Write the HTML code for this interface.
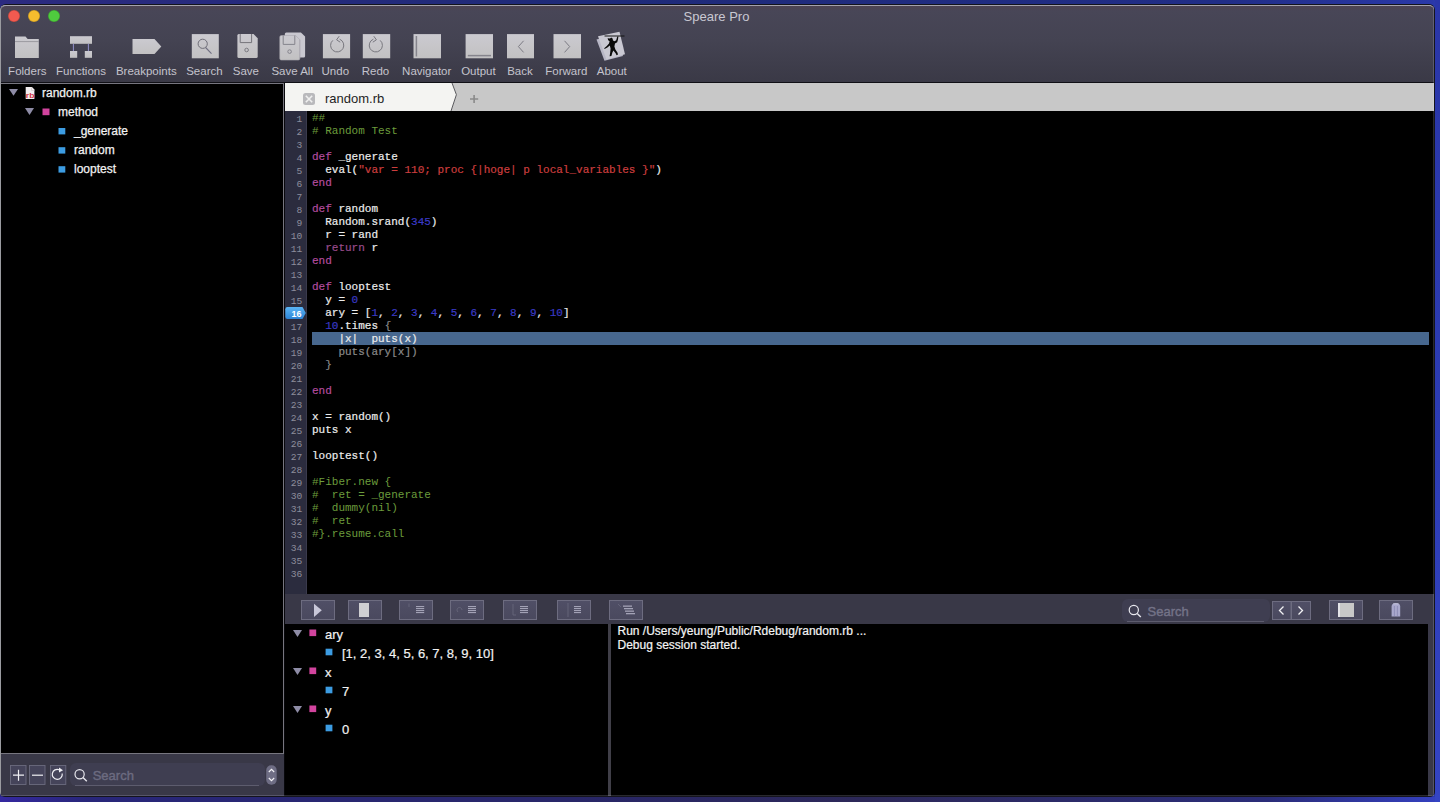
<!DOCTYPE html>
<html><head><meta charset="utf-8">
<style>
*{margin:0;padding:0;box-sizing:border-box}
html,body{width:1440px;height:802px;overflow:hidden}
body{position:relative;background:linear-gradient(90deg,#2c2a80 0%,#1f2a78 40%,#212d86 85%,#2a38a8 99.5%,#2c3cb8 100%);font-family:"Liberation Sans",sans-serif}
.a{position:absolute}
#frame{left:0;top:4px;width:1435px;height:793px;background:#14141c;border-radius:6px 6px 5px 5px}
#edge{left:0;top:5px;width:1434px;height:791px;border-left:1px solid #9a9ba0;border-top:1px solid #9a9ba0;border-radius:5px 5px 4px 4px;background:#393847}
#inner{left:1px;top:5px;width:1433px;height:791px;background:#393847;border-radius:5px 5px 4px 4px;overflow:hidden}
#tb{left:1px;top:5px;width:1433px;height:77px;background:linear-gradient(180deg,#4e4352 0px,#484657 5px,#444352 35px,#3a3946 76px);border-top:1px solid #a4a2ac;border-radius:5px 5px 0 0}
#tbline{left:1px;top:82px;width:1433px;height:1px;background:#101016}
.title{left:-1px;width:1435px;top:8.5px;text-align:center;color:#c9c8d2;font-size:13px}
.light{width:12px;height:12px;border-radius:50%;box-shadow:inset 0 0 0 0.6px rgba(0,0,0,0.22)}
.tl{font-size:11.5px;color:#c4c3cc;top:64px;white-space:nowrap;text-align:center;width:80px}
.ic{background:#c4c3c8}
#left{left:1px;top:83px;width:283px;height:671px;background:#000;border-top:1px solid #77767f;border-right:1px solid #77767f;border-bottom:1px solid #77767f}
.tree{font-size:12px;color:#f0f0f0;white-space:nowrap}
.tri{width:0;height:0;border-left:4.5px solid transparent;border-right:4.5px solid transparent;border-top:7px solid #8e8ca4}
.sqp{width:7px;height:7px;background:#d03a9a}
.sqb{width:7px;height:7px;background:#3a9ae0}
#lbar{left:1px;top:754px;width:283px;height:42px;background:#393847}
#tabbar{left:285px;top:83px;width:1149px;height:28px;background:#c8c8c8}
#gutter{left:285px;top:111px;width:22px;height:483px;background:#2b2c3e;border-right:1px solid #3a3a4c}
#code{left:307px;top:111px;width:1127px;height:483px;background:#000}
pre.ln{font-family:"Liberation Mono",monospace;font-size:9.6px;line-height:13px;color:#8e8e9c;-webkit-text-stroke-width:0;left:285px;width:17.2px;text-align:right}
pre{font-family:"Liberation Mono",monospace;font-size:11px;line-height:13px;color:#ececec;-webkit-text-stroke-width:0.2px}
.k{color:#b44c9e}.c{color:#6c9c3c;-webkit-text-stroke-width:0}.s{color:#cc3e3e}.n{color:#3a3ac6}.g{color:#8a8a8a}.r{color:#9a4c8c}
#dtb{left:285px;top:595px;width:1149px;height:29px;background:#393847}
.db{width:34px;height:20px;background:#4a4a5e;border:1px solid #6e6d80}
#vars{left:285px;top:624px;width:323px;height:172px;background:#000}
#div{left:608px;top:624px;width:3px;height:172px;background:#403f48}
#out{left:611px;top:624px;width:817px;height:172px;background:#000}
.out{font-size:12px;color:#f2f2f2;line-height:14px;white-space:pre}
.vt{font-size:13px;color:#f0f0f0;white-space:nowrap}
#bline{left:1px;top:795px;width:1433px;height:1px;background:rgba(225,225,255,0.18)}
#rline{left:1433px;top:6px;width:1px;height:790px;background:rgba(225,225,255,0.18)}
</style></head><body>
<div class="a" style="left:0;top:797px;width:1440px;height:5px;background:linear-gradient(90deg,#3428a0 0%,#28267a 6%,#282668 40%,#2c2858 60%,#2a2c78 88%,#3440c0 100%)"></div>
<div class="a" style="left:1435px;top:0;width:5px;height:802px;background:linear-gradient(180deg,#2a36a8 0%,#2c3cb4 50%,#3444c4 100%)"></div>
<div id="frame" class="a"></div>
<div id="edge" class="a"></div>
<div id="tb" class="a"></div>
<div id="tbline" class="a"></div>
<div class="a title">Speare Pro</div>
<div class="a light" style="left:8px;top:10px;background:#f25a50"></div>
<div class="a light" style="left:28px;top:10px;background:#f6bd2e"></div>
<div class="a light" style="left:48px;top:10px;background:#4fcb3e"></div>
<svg class="a" style="left:0;top:0" width="700" height="82" viewBox="0 0 700 82">
<defs>
<linearGradient id="ig" x1="0" y1="0" x2="0" y2="1"><stop offset="0" stop-color="#cbcad0"/><stop offset="1" stop-color="#c2c1c2"/></linearGradient>
</defs>
<g fill="url(#ig)">
<!-- Folders -->
<path d="M15 36.5h10.5l2.2 2.5H38.8V58H15z"/>
<!-- Functions -->
<rect x="70" y="36.2" width="22" height="7.6"/>
<rect x="70" y="51" width="7.2" height="6.8"/>
<rect x="84.8" y="51" width="7.2" height="6.8"/>
<!-- Breakpoints -->
<path d="M132.5 39H154.5L161.3 46.5L154.5 54H132.5z"/>
<!-- Search -->
<rect x="191.8" y="34.1" width="27" height="24.2"/>
<!-- Save -->
<path d="M237.4 35.5q0-1.5 1.5-1.5H253.5L257.7 38.2V56.5q0 1.5-1.5 1.5H238.9q-1.5 0-1.5-1.5z"/>
<!-- Save All back -->
<path d="M284.8 33.9q0-1.5 1.5-1.5H300.9L305.1 36.6V55.9q0 1.5-1.5 1.5H286.3q-1.5 0-1.5-1.5z" fill="#c9c8d0"/>
<!-- Save All front -->
<path d="M279.8 37q0-1.5 1.5-1.5H295.6L299.8 39.7V58.5q0 1.5-1.5 1.5H281.3q-1.5 0-1.5-1.5z" stroke="#a9a8b0" stroke-width="0.6"/>
<!-- Undo/Redo/Navigator/Output/Back/Forward -->
<rect x="322.9" y="34.1" width="27.2" height="24.2"/>
<rect x="362.8" y="34.1" width="27.4" height="24.2"/>
<rect x="413.5" y="34.1" width="27.5" height="24.2"/>
<rect x="465.6" y="34.1" width="27.4" height="24.2"/>
<rect x="507" y="34.1" width="27" height="24.2"/>
<rect x="553.5" y="34.1" width="27.5" height="24.2"/>
<!-- About -->
<path d="M596.5 39.5L616.5 34L623 56L604.5 60.8z" fill="#b8b7c6"/>
<path d="M598 36.3L619.5 31.8L625 54.2L606.5 59.5z" fill="#c9c8d2"/>
</g>
<g fill="none" stroke="#77767e" stroke-width="1">
<path d="M15 41.6H38.8" stroke="#8e8d94" stroke-width="0.8"/>
<path d="M73.4 43.8V51M88.4 43.8V51" stroke="#9b9ad8" stroke-width="0.9"/>
<circle cx="202.7" cy="43.8" r="4.6" stroke="#6f6e78"/>
<path d="M205.6 47.5L211.5 53.6" stroke="#6f6e80" stroke-width="1.1"/>
<path d="M240.2 34V42.6H251.6V34" stroke="#74737a"/>
<circle cx="246.6" cy="50" r="1.8" stroke="#7c7b82"/>
<path d="M283.2 35.5V44.4H294.8V35.5" stroke="#85848c"/>
<circle cx="289.6" cy="51.6" r="1.8" stroke="#85848c"/>
<path d="M299.8 39.7V58.5" stroke="#a2a1aa" stroke-width="0.6"/>
<path d="M332.8 40.4A6.6 6.6 0 1 0 339.6 39.2" stroke="#78777e"/>
<path d="M339.2 36.2L336.6 39.8L340.2 42.2" stroke="#78777e"/>
<path d="M380.2 40.4A6.6 6.6 0 1 1 373.4 39.2" stroke="#78777e"/>
<path d="M373.8 36.2L376.4 39.8L372.8 42.2" stroke="#78777e"/>
<path d="M416.4 36V56.5" stroke="#85848c" stroke-width="1.5"/>
<path d="M467.8 55.6H491" stroke="#85848c" stroke-width="1.5"/>
<path d="M523.6 40.8L518.4 46.6L523.6 52.4" stroke="#7c7b84"/>
<path d="M564.5 40.8L569.7 46.6L564.5 52.4" stroke="#7c7b84"/>
</g>
<!-- about figure -->
<g fill="#0a0a0a">
<path d="M604.5 35.6L624.5 35.4L624.5 36.4L604.5 36.6z" fill="#151515"/>
<path d="M607.6 38.2L610 38.6L611.2 37.6L612.6 38.4L613 40.4L614.6 41.2L616.2 40.2L617 37.4L617.6 36.2L618.4 36.6L618 39.4L617.2 42.2L615 43.6L614.4 46.4L615.4 49.4L617.4 52.4L618 54.6L616.6 55.2L615.6 53.2L613.4 50.6L612.4 52.6L611.4 56L609.6 56.2L610.2 52.4L610.6 48.4L609.8 45.6L607.4 47.4L604.6 49L604.2 48.2L606.8 46L609 43.4L609.6 41.2L608.2 40.2z"/>
</g>
<g font-family="Liberation Sans" font-size="11.5" fill="#c4c3cc" text-anchor="middle">
<text x="27.3" y="75">Folders</text>
<text x="81" y="75">Functions</text>
<text x="146.3" y="75">Breakpoints</text>
<text x="204.4" y="75">Search</text>
<text x="245.9" y="75">Save</text>
<text x="292.2" y="75">Save All</text>
<text x="335.3" y="75">Undo</text>
<text x="375.5" y="75">Redo</text>
<text x="426.7" y="75">Navigator</text>
<text x="478.4" y="75">Output</text>
<text x="520" y="75">Back</text>
<text x="566.4" y="75">Forward</text>
<text x="611.8" y="75">About</text>
</g>
</svg>
<div id="left" class="a"></div>
<svg class="a" style="left:0;top:83px" width="284" height="100" viewBox="0 83 284 100">
<g fill="#8e8ca6">
<path d="M9 89H18L13.5 95.8z"/>
<path d="M25 108H34L29.5 115z"/>
</g>
<path d="M25.7 87.1H32L34.4 89.6V98.9H25.7z" fill="#f2eef0"/>
<path d="M31.5 87.5V90.5H34.5" fill="none" stroke="#c8c0c0" stroke-width="0.6"/>
<text x="25.8" y="97.6" font-family="Liberation Sans" font-size="8" font-weight="bold" fill="#d03848" textLength="8.6" lengthAdjust="spacingAndGlyphs">rb</text>
<rect x="42.5" y="108.5" width="7" height="6.7" fill="#d2449e"/>
<g fill="#3c9ce2">
<rect x="58.5" y="128" width="6.8" height="6.4"/>
<rect x="58.5" y="147.2" width="6.8" height="6.4"/>
<rect x="58.5" y="166.2" width="6.8" height="6.4"/>
</g>
<g font-family="Liberation Sans" font-size="12" fill="#f2f2f2" stroke="#f2f2f2" stroke-width="0.25">
<text x="42" y="96.8">random.rb</text>
<text x="58" y="115.8">method</text>
<text x="74" y="134.5">_generate</text>
<text x="74" y="153.5">random</text>
<text x="74" y="172.5">looptest</text>
</g>
</svg>
<div id="lbar" class="a"></div>
<svg class="a" style="left:0;top:754px" width="285" height="42" viewBox="0 754 285 42">
<g fill="#45445a" stroke="#6b6a7e" stroke-width="0.9">
<rect x="10.5" y="765.5" width="15.5" height="19"/>
<rect x="29.5" y="765.5" width="15.5" height="19"/>
<rect x="50.5" y="765.5" width="15.3" height="19"/>
</g>
<path d="M13 775.2H24M18.5 769.7V780.7" stroke="#f0f0f4" stroke-width="1.2"/>
<path d="M32 775.2H43" stroke="#f0f0f4" stroke-width="1.2"/>
<path d="M62.2 773.5A5 5 0 1 1 59.2 769.7" fill="none" stroke="#f0f0f4" stroke-width="1.2"/>
<path d="M59 767.5L63 770.2L59 772.6z" fill="#f0f0f4"/>
<rect x="70" y="763" width="195" height="23" rx="6" fill="#3f3e51"/><path d="M75 785.5H259" stroke="#5d5c6e" stroke-width="1"/>
<circle cx="79.6" cy="774.2" r="4.6" fill="none" stroke="#e8e8ee" stroke-width="1.2"/>
<path d="M83 777.6L86.8 781.2" stroke="#e8e8ee" stroke-width="1.4"/>
<text x="92.7" y="779.8" font-family="Liberation Sans" font-size="13" fill="#6c6b80" stroke="#6c6b80" stroke-width="0.4">Search</text>
<rect x="266.2" y="765.2" width="10.5" height="19.6" rx="5" fill="#6e6d84"/>
<path d="M268.8 772L271.5 769.3L274.2 772M268.8 778L271.5 780.7L274.2 778" fill="none" stroke="#f4f4f8" stroke-width="1.1"/>
</svg>
<div id="tabbar" class="a"></div>
<svg class="a" style="left:285px;top:83px" width="1148" height="28" viewBox="285 83 1148 28">
<path d="M285 83H452L456.4 94.7L451 111H285z" fill="#f4f4f2"/>
<path d="M452 83L456.4 94.7L451 111" fill="none" stroke="#5a5a5e" stroke-width="1"/>
<rect x="303" y="93" width="12" height="12" rx="2.5" fill="#b9b9bc"/>
<path d="M305.8 95.8L312.2 102.2M312.2 95.8L305.8 102.2" stroke="#f0f0f0" stroke-width="1.6"/>
<text x="325" y="103" font-family="Liberation Sans" font-size="13" fill="#1e1e1e">random.rb</text>
<path d="M470 99H478.2M474.1 94.9V103.1" stroke="#8a8a8a" stroke-width="1.6"/>
</svg>
<div id="gutter" class="a"></div>
<div id="code" class="a"></div>
<div class="a" style="left:312px;top:332px;width:1117px;height:13px;background:#47678e"></div>
<pre class="a" style="left:312px;top:111.6px"><span class="c">##</span>
<span class="c"># Random Test</span>

<span class="k">def</span> _generate
  eval(<span class="s">"var = 110; proc {|hoge| p local_variables }"</span>)
<span class="k">end</span>

<span class="k">def</span> random
  Random.srand(<span class="n">345</span>)
  r = rand
  <span class="r">return</span> r
<span class="k">end</span>

<span class="k">def</span> looptest
  y = <span class="n">0</span>
  ary = [<span class="n">1</span>, <span class="n">2</span>, <span class="n">3</span>, <span class="n">4</span>, <span class="n">5</span>, <span class="n">6</span>, <span class="n">7</span>, <span class="n">8</span>, <span class="n">9</span>, <span class="n">10</span>]
  <span class="n">10</span>.times <span class="g">{</span>
    |x|  puts(x)
    <span class="g">puts(ary[x])</span>
  <span class="g">}</span>

<span class="k">end</span>

x = random()
puts x

looptest()

<span class="c">#Fiber.new {</span>
<span class="c">#  ret = _generate</span>
<span class="c">#  dummy(nil)</span>
<span class="c">#  ret</span>
<span class="c">#}.resume.call</span>


</pre>
<pre class="a ln" style="top:113px">1
2
3
4
5
6
7
8
9
10
11
12
13
14
15

17
18
19
20
21
22
23
24
25
26
27
28
29
30
31
32
33
34
35
36</pre>
<svg class="a" style="left:285px;top:306px" width="22" height="14" viewBox="285 306 22 14">
<defs><linearGradient id="bp" x1="0" y1="0" x2="0" y2="1"><stop offset="0" stop-color="#5ab4f4"/><stop offset="1" stop-color="#2c84d6"/></linearGradient></defs>
<path d="M287.5 307H302.5L305.8 313L302.5 319H287.5Q285.3 319 285.3 316.8V309.2Q285.3 307 287.5 307z" fill="url(#bp)"/>
<text x="301.5" y="316.6" text-anchor="end" font-family="Liberation Sans" font-size="9" font-weight="bold" fill="#fff">16</text>
</svg>
<div id="dtb" class="a"></div>
<svg class="a" style="left:285px;top:595px" width="1148" height="29" viewBox="285 595 1148 29">
<defs><linearGradient id="btn" x1="0" y1="0" x2="0" y2="1"><stop offset="0" stop-color="#504f66"/><stop offset="1" stop-color="#4a495e"/></linearGradient></defs>
<g fill="url(#btn)" stroke="#6d6c80" stroke-width="1">
<rect x="301.5" y="600.5" width="33" height="19"/>
<rect x="348.5" y="600.5" width="33" height="19"/>
<rect x="399.5" y="600.5" width="33" height="19"/>
<rect x="450.5" y="600.5" width="33" height="19"/>
<rect x="503.5" y="600.5" width="33" height="19"/>
<rect x="557.5" y="600.5" width="33" height="19"/>
<rect x="609.5" y="600.5" width="33" height="19"/>
<rect x="1272.5" y="601.5" width="18.5" height="18"/>
<rect x="1291.5" y="601.5" width="19" height="18"/>
<rect x="1329.5" y="600.5" width="33" height="19"/>
<rect x="1379.5" y="600.5" width="33" height="19"/>
</g>
<path d="M314 603.8L321.8 610.3L314 616.9z" fill="#c8c7d8"/>
<rect x="359" y="603" width="10" height="14" fill="#cfcfd2"/>
<g fill="#a3a2b6">
<rect x="416" y="606" width="8.2" height="1.1"/><rect x="416" y="608" width="8.2" height="1.1"/><rect x="416" y="610" width="8.2" height="1.1"/><rect x="416" y="612" width="8.2" height="1.1"/>
<rect x="468" y="606" width="8" height="1.1"/><rect x="468" y="608" width="8" height="1.1"/><rect x="468" y="610" width="8" height="1.1"/><rect x="468" y="612" width="8" height="1.1"/>
<rect x="520" y="606" width="8" height="1.1"/><rect x="520" y="608" width="8" height="1.1"/><rect x="520" y="610" width="8" height="1.1"/><rect x="520" y="612" width="8" height="1.1"/>
<rect x="574" y="606" width="7" height="1.1"/><rect x="574" y="608" width="7" height="1.1"/><rect x="574" y="610" width="7" height="1.1"/><rect x="574" y="612" width="7" height="1.1"/>
<rect x="623" y="605.5" width="9" height="1.3"/><rect x="624" y="608" width="9" height="1.3"/><rect x="625" y="610.5" width="9" height="1.3"/><rect x="626" y="613" width="9" height="1.3"/>
</g>
<g stroke="#6a6a7e" stroke-width="0.8" fill="none">
<path d="M409 603.5V607"/>
<path d="M458 612a2.5 2.5 0 1 1 4-2"/>
<path d="M513 604V615H516"/>
<path d="M568 603V617"/>
<path d="M618 604L621 607"/>
</g>
<!-- search field -->
<rect x="1122" y="599" width="148" height="23" rx="6" fill="#3f3e51"/><path d="M1127 621.5H1264" stroke="#5d5c6e" stroke-width="1"/>
<circle cx="1133.8" cy="610" r="4.6" fill="none" stroke="#e8e8ee" stroke-width="1.2"/>
<path d="M1137.2 613.4L1140.8 617" stroke="#e8e8ee" stroke-width="1.4"/>
<text x="1147.5" y="615.8" font-family="Liberation Sans" font-size="13" fill="#747388" stroke="#747388" stroke-width="0.4">Search</text>
<path d="M1283.5 606.5L1279.5 610.5L1283.5 614.5M1298.5 606.5L1302.5 610.5L1298.5 614.5" fill="none" stroke="#f2f2f4" stroke-width="1.3"/>
<rect x="1338" y="603" width="16" height="14" fill="#c8c8c8"/>
<rect x="1338" y="603" width="2" height="14" fill="#e4e4e8"/>
<path d="M1391.6 606.5Q1391.6 603.2 1395.9 603.2Q1400.2 603.2 1400.2 606.5V616.4H1391.6z" fill="#a9a8cc"/>
<path d="M1393.2 603.8H1398.6" stroke="#d8d8ec" stroke-width="0.8"/>
<path d="M1394.4 606V616M1397.4 606V616" stroke="#7c7aa8" stroke-width="0.6"/>
</svg>
<div id="vars" class="a"></div>
<svg class="a" style="left:285px;top:624px" width="323" height="120" viewBox="285 624 323 120">
<g fill="#8e8ca6">
<path d="M293 630H302L297.5 637z"/>
<path d="M293 668H302L297.5 675z"/>
<path d="M293 706H302L297.5 713z"/>
</g>
<g fill="#d2449e">
<rect x="309.4" y="629.5" width="6.8" height="6.6"/>
<rect x="309.4" y="667.5" width="6.8" height="6.6"/>
<rect x="309.4" y="705.5" width="6.8" height="6.6"/>
</g>
<g fill="#3c9ce2">
<rect x="325.6" y="648.7" width="6.8" height="6.6"/>
<rect x="325.6" y="686.7" width="6.8" height="6.6"/>
<rect x="325.6" y="724.7" width="6.8" height="6.6"/>
</g>
<g font-family="Liberation Sans" font-size="13" fill="#f2f2f2" stroke="#f2f2f2" stroke-width="0.2">
<text x="325" y="638.7">ary</text>
<text x="342" y="657.8">[1, 2, 3, 4, 5, 6, 7, 8, 9, 10]</text>
<text x="325" y="676.7">x</text>
<text x="342" y="695.8">7</text>
<text x="325" y="714.7">y</text>
<text x="342" y="733.8">0</text>
</g>
</svg>
<div id="div" class="a"></div>
<div id="out" class="a"></div>
<svg class="a" style="left:610px;top:624px" width="400" height="40" viewBox="610 624 400 40">
<g font-family="Liberation Sans" font-size="12" fill="#f4f4f4" stroke="#f4f4f4" stroke-width="0.2">
<text x="617.5" y="635.2">Run /Users/yeung/Public/Rdebug/random.rb ...</text>
<text x="617.5" y="648.8">Debug session started.</text>
</g>
</svg>
<div class="a" style="left:284px;top:83px;width:1px;height:713px;background:#08080c"></div><div id="bline" class="a"></div><div id="rline" class="a"></div>
</body></html>
